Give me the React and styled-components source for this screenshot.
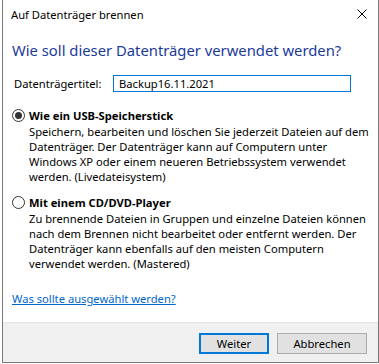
import React from 'react';
import styled, { createGlobalStyle } from 'styled-components';

const GlobalStyle = createGlobalStyle`
  html, body {
    margin: 0;
    padding: 0;
    background: #ffffff;
  }
  body {
    font-family: "Noto Sans", "Open Sans", sans-serif;
    font-size: 11.2px;
    color: #000;
  }
`;

const Window = styled.div`
  margin-left: 2px;
  width: 375px;
  height: 362px;
  border: 1px solid #7a7a7a;
  border-top: none;
  background: #fff;
  display: flex;
  flex-direction: column;
`;

const TitleBar = styled.div`
  height: 29px;
  display: flex;
  align-items: center;
  justify-content: space-between;
  padding: 0 11px 0 8px;
`;

const Title = styled.span`
  margin-top: -1px;
`;

const Close = styled.svg`
  width: 10px;
  height: 10px;
  margin-top: -2px;
`;

const Body = styled.div`
  flex: 1;
  padding: 11px 0 0 9px;
  display: flex;
  flex-direction: column;
`;

const Heading = styled.h1`
  margin: 0;
  font-size: 14.8px;
  font-weight: 400;
  line-height: 21px;
  color: #1c3a9b;
`;

const FieldRow = styled.div`
  display: flex;
  align-items: center;
  margin-top: 14px;
  padding-left: 2px;
`;

const Label = styled.label`
  width: 99px;
`;

const TextInput = styled.div`
  width: 231px;
  height: 15px;
  border: 1px solid #0078d7;
  padding: 0 0 0 5px;
  line-height: 15px;
`;

const Option = styled.div`
  display: flex;
  flex-direction: column;
  margin-top: ${p => p.$gap}px;
`;

const OptionHead = styled.div`
  display: flex;
  align-items: center;
  height: 16px;
  font-weight: 700;
`;

const Radio = styled.span`
  width: 11px;
  height: 11px;
  border: 1px solid #333;
  border-radius: 50%;
  margin-right: 4px;
  display: flex;
  align-items: center;
  justify-content: center;
  &::after {
    content: '';
    width: 7px;
    height: 7px;
    border-radius: 50%;
    background: ${p => (p.$checked ? '#333' : 'transparent')};
  }
`;

const Desc = styled.div`
  margin: 1px 0 0 17px;
  line-height: 15px;
`;

const Line = styled.span`
  display: block;
  white-space: nowrap;
`;

const HelpLink = styled.a`
  margin-top: 20px;
  color: #0066cc;
  text-decoration: underline;
  line-height: 16px;
`;

const Footer = styled.div`
  height: 40px;
  background: #f0f0f0;
  border-top: 1px solid #e5e5e5;
  display: flex;
  justify-content: flex-end;
  align-items: flex-start;
  padding: 10px 11px 0 0;
  gap: 8px;
  box-sizing: border-box;
`;

const Button = styled.button`
  font-family: inherit;
  font-size: 11.2px;
  width: ${p => p.$w}px;
  height: 21px;
  padding: 0;
  background: #e1e1e1;
  border: ${p => (p.$primary ? '2px solid #0078d7' : '1px solid #adadad')};
  color: #000;
`;

const options = [
  {
    label: 'Wie ein USB-Speicherstick',
    checked: true,
    gap: 15,
    lines: [
      'Speichern, bearbeiten und löschen Sie jederzeit Dateien auf dem',
      'Datenträger. Der Datenträger kann auf Computern unter',
      'Windows XP oder einem neueren Betriebssystem verwendet',
      'werden. (Livedateisystem)',
    ],
  },
  {
    label: 'Mit einem CD/DVD-Player',
    checked: false,
    gap: 10,
    lines: [
      'Zu brennende Dateien in Gruppen und einzelne Dateien können',
      'nach dem Brennen nicht bearbeitet oder entfernt werden. Der',
      'Datenträger kann ebenfalls auf den meisten Computern',
      'verwendet werden. (Mastered)',
    ],
  },
];

export default function App() {
  return (
    <>
      <GlobalStyle />
      <Window>
        <TitleBar>
          <Title>Auf Datenträger brennen</Title>
          <Close viewBox="0 0 10 10">
            <path d="M0.5 0.5 L9.5 9.5 M9.5 0.5 L0.5 9.5" stroke="#000" strokeWidth="1" />
          </Close>
        </TitleBar>
        <Body>
          <Heading>Wie soll dieser Datenträger verwendet werden?</Heading>
          <FieldRow>
            <Label>Datenträgertitel:</Label>
            <TextInput>Backup16.11.2021</TextInput>
          </FieldRow>
          {options.map(o => (
            <Option key={o.label} $gap={o.gap}>
              <OptionHead>
                <Radio $checked={o.checked} />
                {o.label}
              </OptionHead>
              <Desc>
                {o.lines.map(l => (
                  <Line key={l}>{l}</Line>
                ))}
              </Desc>
            </Option>
          ))}
          <HelpLink>Was sollte ausgewählt werden?</HelpLink>
        </Body>
        <Footer>
          <Button $primary $w={70}>Weiter</Button>
          <Button $w={90}>Abbrechen</Button>
        </Footer>
      </Window>
    </>
  );
}
